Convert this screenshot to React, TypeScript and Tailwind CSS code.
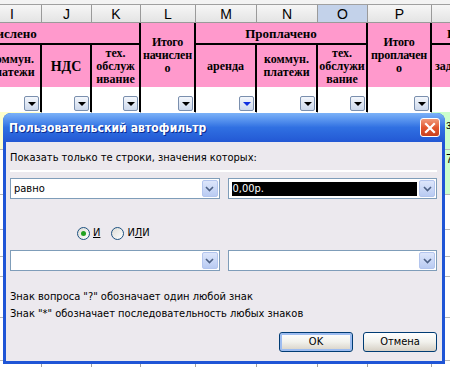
import React from "react";

const cols = "grid grid-cols-[59px_50px_49px_55px_61px_61px_50px_64px_60px]";
const serif = "font-['Liberation_Serif','Times_New_Roman',serif] font-bold text-black";
const ui = "font-['DejaVu_Sans_Condensed','Liberation_Sans',sans-serif]";

const letters = ["I", "J", "K", "L", "M", "N", "O", "P", "Q"];

function FilterButton({ active }: { active?: boolean }) {
  return (
    <div className="w-[15px] h-[15px] border border-[#7a8fae] rounded-[2px] bg-gradient-to-b from-[#f4f7fc] to-[#cdd9ec] flex items-center justify-center">
      <div
        className={`w-0 h-0 border-l-[4px] border-r-[4px] border-t-[4px] border-l-transparent border-r-transparent ${
          active ? "border-t-[#1030e0]" : "border-t-black"
        }`}
      />
    </div>
  );
}

function Combo({ value, selected }: { value?: string; selected?: boolean }) {
  return (
    <div className="h-[21px] flex-1 flex items-center border border-[#7f9db9] bg-white p-[1px]">
      <div className="flex-1 h-full flex items-center pl-[2px] pr-[2px]">
        {selected ? (
          <div className="h-[14px] w-full bg-black text-white flex items-center pl-[1px] text-[11px] leading-none">
            {value}
          </div>
        ) : (
          <span className="text-[11px] leading-none text-black">{value}</span>
        )}
      </div>
      <div className="w-[16px] h-full rounded-[2px] border border-[#b3c5ee] bg-gradient-to-b from-[#dde6fb] to-[#b9cbf2] flex items-center justify-center">
        <svg width="9" height="6" viewBox="0 0 9 6">
          <path d="M1 1 L4.5 4.5 L8 1" fill="none" stroke="#4d6185" strokeWidth="1.6" />
        </svg>
      </div>
    </div>
  );
}

function Radio({ checked }: { checked?: boolean }) {
  return (
    <div className="w-[13px] h-[13px] rounded-full border border-[#1c5180] bg-gradient-to-br from-[#dcdcd6] to-white flex items-center justify-center">
      {checked && <div className="w-[5px] h-[5px] rounded-full bg-[#21a121]" />}
    </div>
  );
}

function XpButton({ label, def }: { label: string; def?: boolean }) {
  return (
    <div
      className={`w-[74px] h-[20px] rounded-[3px] border border-[#003c74] bg-gradient-to-b from-white via-[#f1f1ec] to-[#d6d0c5] flex items-center justify-center text-[11px] text-black ${
        def ? "shadow-[inset_0_0_0_2px_#9dbcf0]" : ""
      }`}
    >
      {label}
    </div>
  );
}

export default function App() {
  const dataRows = [38, 45, 35, 27, 20, 41, 43, 40];
  return (
    <div className="relative w-[450px] h-[367px] overflow-hidden bg-white">
      <div className="-ml-[17px] w-[500px]">
        {/* column letters */}
        <div className="h-[5px] bg-[#f3f3f3] border-b border-[#a0a0a0]" />
        <div className={`${cols} h-[18px] border-b border-[#9a9a9a]`}>
          {letters.map((l) => (
            <div
              key={l}
              className={`flex items-center justify-center border-r border-[#9a9a9a] text-[14px] leading-none text-black font-['Liberation_Sans',sans-serif] ${
                l === "O" ? "bg-[#c3d2ea]" : "bg-gradient-to-b from-[#f6f6f6] to-[#e4e4e4]"
              }`}
            >
              {l}
            </div>
          ))}
        </div>

        {/* header block */}
        <div className={`${cols} grid-rows-[22px_42px_25px] ${serif} text-[12px] leading-[13px]`}>
          <div className="col-span-3 bg-[#ff99cc] border-r-2 border-b-2 border-black flex items-center overflow-hidden text-[13px]">
            <span className="-ml-[10px] whitespace-nowrap">Начислено</span>
          </div>
          <div className="row-span-2 bg-[#ff99cc] border-r-2 border-black flex items-center justify-center text-center text-[12px] tracking-[-0.2px]">
            Итого
            <br />
            начислен
            <br />о
          </div>
          <div className="col-span-3 bg-[#ff99cc] border-r-2 border-b-2 border-black flex items-center justify-center text-[13px]">
            Проплачено
          </div>
          <div className="row-span-2 bg-[#ff99cc] border-r-2 border-black flex items-center justify-center text-center text-[12px] tracking-[-0.2px]">
            Итого
            <br />
            проплачен
            <br />о
          </div>
          <div className="bg-[#ff99cc] border-b-2 border-black flex items-center overflow-hidden text-[13px]">
            <span className="pl-[15px] whitespace-nowrap">Итого</span>
          </div>

          <div className="bg-[#ff99cc] border-r-2 border-black flex items-center justify-center text-center">
            коммун.
            <br />
            платежи
          </div>
          <div className="bg-[#ff99cc] border-r-2 border-black flex items-center justify-center text-[14px]">НДС</div>
          <div className="bg-[#ff99cc] border-r-2 border-black flex items-center justify-center text-center">
            тех.
            <br />
            обслуж
            <br />
            ивание
          </div>
          <div className="bg-[#ff99cc] border-r-2 border-black flex items-center justify-center">аренда</div>
          <div className="bg-[#ff99cc] border-r-2 border-black flex items-center justify-center text-center">
            коммун.
            <br />
            платежи
          </div>
          <div className="bg-[#ff99cc] border-r-2 border-black flex items-center justify-center text-center">
            тех.
            <br />
            обслужи
            <br />
            вание
          </div>
          <div className="bg-[#ff99cc] flex items-center overflow-hidden">
            <span className="pl-[3px] whitespace-nowrap">задолженность</span>
          </div>

          {letters.map((l, i) => (
            <div
              key={"f" + l}
              className={`flex items-end justify-end pr-[1px] pb-[1px] ${i < 8 ? "border-r-2 border-black" : ""}`}
            >
              {i < 8 && <FilterButton active={l === "M"} />}
            </div>
          ))}
        </div>

        {/* data rows behind dialog */}
        {dataRows.map((h, r) => (
          <div key={r} className={`${cols} border-b border-[#b8b8b8]`} style={{ height: h }}>
            {letters.map((l, i) => (
              <div
                key={l}
                className={`border-r border-[#a0a0a0] text-[12px] text-black font-['Liberation_Sans',sans-serif] ${
                  i === 8 && r < 2 ? "bg-[#ccffcc]" : i === 0 && r === 0 ? "bg-[#ffffcc]" : ""
                }`}
              >
                {i === 8 && r === 0 && <span className="pl-[14px] leading-[26px]">з</span>}
                {i === 8 && r === 1 && <span className="pl-[14px]">7</span>}
              </div>
            ))}
          </div>
        ))}
      </div>

      {/* dialog */}
      <div className={`absolute left-[3px] top-[113px] w-[442px] h-[251px] flex flex-col rounded-t-[8px] overflow-hidden bg-[#1f55d6] ${ui}`}>
        <div className="h-[29px] shrink-0 flex items-center pl-[6px] pr-[5px] bg-gradient-to-b from-[#7cb2f8] via-[#3070e2] to-[#2358d4]">
          <span className="text-white text-[12px] font-bold [text-shadow:1px_1px_0_#0a2a90] tracking-[0.1px]">
            Пользовательский автофильтр
          </span>
          <div className="ml-auto w-[20px] h-[19px] rounded-[3px] border border-white bg-gradient-to-b from-[#f09a7a] via-[#e2572f] to-[#c8401e] flex items-center justify-center">
            <svg width="12" height="12" viewBox="0 0 12 12">
              <path d="M2 2 L10 10 M10 2 L2 10" stroke="white" strokeWidth="2.2" strokeLinecap="square" />
            </svg>
          </div>
        </div>
        <div className="flex-1 mx-[3px] mb-[3px] bg-[#ece9ee] flex flex-col pl-[4px] pr-[5px] text-[11px] text-black">
          <div className="pt-[9px] h-[24px] leading-[13px]">Показать только те строки, значения которых:</div>
          <div className="mt-[4px] h-[2px] border-t border-[#c6c4c9] border-b border-white" />
          <div className="mt-[6px] flex gap-[8px]">
            <Combo value="равно" />
            <Combo value="0,00р." selected />
          </div>
          <div className="mt-[27px] flex items-center gap-[3px] pl-[67px] h-[15px]">
            <Radio checked />
            <span className="mr-[8px]">
              <span className="underline">И</span>
            </span>
            <Radio />
            <span>
              И<span className="underline">Л</span>И
            </span>
          </div>
          <div className="mt-[9px] flex gap-[8px]">
            <Combo />
            <Combo />
          </div>
          <div className="mt-[17px] leading-[17px]">
            <div>Знак вопроса "?" обозначает один любой знак</div>
            <div>Знак "*" обозначает последовательность любых знаков</div>
          </div>
          <div className="mt-[10px] flex justify-end gap-[10px]">
            <XpButton label="OK" def />
            <XpButton label="Отмена" />
          </div>
        </div>
      </div>
    </div>
  );
}
